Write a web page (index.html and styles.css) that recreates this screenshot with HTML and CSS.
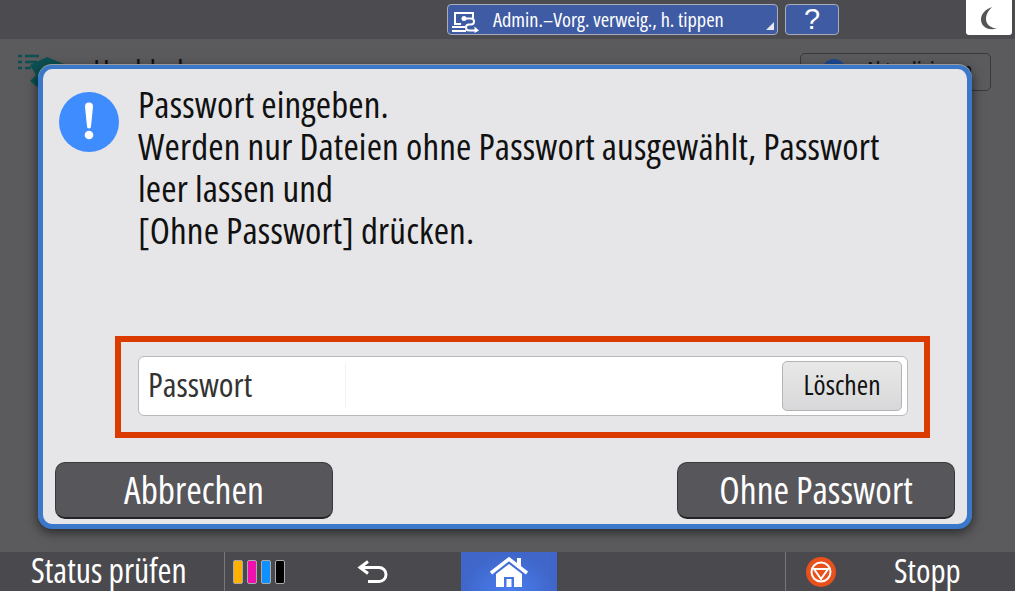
FILE: index.html
```html
<!DOCTYPE html>
<html lang="de">
<head>
  <meta charset="UTF-8">
  <title>Passwort eingeben</title>
  <link rel="stylesheet" href="styles.css">
</head>
<body>
  <div class="topbar">
    <div class="admin-btn">
      <svg class="admin-icon" width="28" height="22" viewBox="0 0 28 22" fill="none" stroke="#fff" stroke-width="2">
        <path d="M21 7V2H3v11h6"/>
        <path d="M0 16h13M0 20h14"/>
        <circle cx="12" cy="7.500" r="2.500" fill="#fff" stroke="none"/>
        <path d="M14 7.500h5a3 3 0 0 1 0 6h-2a3 3 0 0 0 0 6h6"/>
        <path d="M22.500 15.500l4.500 4-4.500 2.500z" fill="#fff" stroke="none"/>
      </svg>
      <span class="narrow admin-label">Admin.–Vorg. verweig., h. tippen</span>
      <span class="corner"></span>
    </div>
    <div class="help-btn">?</div>
    <div class="moon-tile">
      <svg width="16" height="23" viewBox="0 0 16 23"><path d="M11 0C3 3 0 8 0 12.500C0 19 6 24 16 21.500C9 21 5 17 5 12C5 7 8 3 11 0Z" fill="#555"/></svg>
    </div>
  </div>

  <div class="main">
    <div class="behind">
      <svg width="50" height="38" viewBox="0 0 50 38">
        <path d="M0 3h4M7 3h14M0 9h4M7 9h12M0 15h4M7 15h6" stroke="#0c5052" stroke-width="2.500"/>
        <path d="M12 12L29 4l17 7-22 19-5 4-7-6 6-6z" fill="#0c5052"/>
      </svg>
      <span class="narrow behind-title">Hochladen</span>
      <div class="behind-btn">
        <span class="behind-dot"></span>
        <span class="narrow behind-btn-label">Aktualisieren</span>
      </div>
    </div>

    <div class="dialog">
      <div class="message">
        <svg class="info" width="60" height="60" viewBox="0 0 60 60">
          <circle cx="30" cy="30" r="30" fill="#3f8cff"/>
          <path d="M26 14.500a4 4 0 0 1 8 0L32 34.500a2 2 0 0 1-4 0Z" fill="#fff"/>
          <circle cx="30" cy="43" r="4.300" fill="#fff"/>
        </svg>
        <p class="narrow message-text">Passwort eingeben.<br>Werden nur Dateien ohne Passwort ausgewählt, Passwort<br>leer lassen und<br>[Ohne Passwort] drücken.</p>
      </div>

      <div class="highlight">
        <div class="field">
          <span class="narrow field-label">Passwort</span>
          <span class="field-value"></span>
          <div class="narrow clear-btn">Löschen</div>
        </div>
      </div>

      <div class="actions">
        <div class="narrow action-btn">Abbrechen</div>
        <div class="narrow action-btn">Ohne Passwort</div>
      </div>
    </div>
  </div>

  <div class="bottombar">
    <div class="narrow status">Status prüfen</div>
    <div class="inks">
      <span class="ink ink-y"></span>
      <span class="ink ink-m"></span>
      <span class="ink ink-c"></span>
      <span class="ink ink-k"></span>
    </div>
    <div class="back">
      <svg width="32" height="24" viewBox="0 0 32 24" fill="none" stroke="#fff" stroke-width="3">
        <path d="M11 1.500L3 7.500l8 6"/>
        <path d="M3 7.500h19a7 7 0 0 1 0 14H11"/>
      </svg>
    </div>
    <div class="home">
      <svg width="38" height="30" viewBox="0 0 38 30">
        <path d="M1 16L19 2l18 14" fill="none" stroke="#fff" stroke-width="3.500"/>
        <path d="M27 1h4v10h-4z" fill="#fff"/>
        <path fill-rule="evenodd" d="M6 17L19 7l13 10v13H6zM14 20v10h10V20z" fill="#fff"/>
        <path d="M16.500 22h5v8h-5z" fill="#fff"/>
      </svg>
    </div>
    <div class="stop">
      <svg width="30" height="30" viewBox="0 0 30 30" fill="none" stroke="#fff" stroke-width="2">
        <circle cx="15" cy="15" r="15" fill="#e8501c" stroke="none"/>
        <circle cx="15" cy="15" r="9.500"/>
        <path d="M8 12h14l-7 10z"/>
      </svg>
      <span class="narrow stop-label">Stopp</span>
    </div>
  </div>
</body>
</html>
```

FILE: styles.css
```css
html, body {
  margin: 0;
  height: 100%;
}
body {
  width: 1015px;
  height: 591px;
  display: flex;
  flex-direction: column;
  overflow: hidden;
  background: #5b5a5d;
  font-family: "Open Sans", "Noto Sans", sans-serif;
}
.narrow {
  font-family: "Open Sans", "Noto Sans", sans-serif;
  font-stretch: 75%;
  white-space: nowrap;
}

/* top bar */
.topbar {
  height: 39px;
  flex: none;
  display: flex;
  background: #4c4b50;
  padding-left: 447px;
  box-sizing: border-box;
}
.admin-btn, .help-btn {
  height: 31px;
  margin-top: 4px;
  box-sizing: border-box;
  background: #3e5ba3;
  border: 1px solid #a9adb8;
  border-radius: 4px;
  color: #fff;
}
.admin-btn {
  width: 331px;
  display: flex;
  align-items: center;
  padding-left: 4px;
  position: relative;
}
.admin-icon {
  flex: none;
  margin-top: 5px;
}
.admin-label {
  margin: 0 0 2px 13px;
  font-size: 20.400px;
}
.corner {
  position: absolute;
  right: 3px;
  bottom: 4px;
  border-style: solid;
  border-width: 0 0 8px 8px;
  border-color: transparent transparent #e8e8ee transparent;
}
.help-btn {
  width: 54px;
  margin-left: 7px;
  text-align: center;
  font-family: "Liberation Sans", sans-serif;
  font-size: 29px;
  line-height: 28px;
}
.moon-tile {
  width: 46px;
  height: 35px;
  margin-left: 127px;
  background: #fff;
  border-radius: 0 0 3px 3px;
  box-sizing: border-box;
  display: flex;
  align-items: flex-start;
  padding: 7px 0 0 15px;
}

/* page under the dialog */
.main {
  flex: 1;
  position: relative;
}
.behind {
  display: flex;
  align-items: flex-start;
  padding: 14px 24px 0 18px;
}
.behind svg {
  flex: none;
}
.behind-title {
  margin-left: 25px;
  color: #111;
  font-size: 32px;
  line-height: 38px;
}
.behind-btn {
  width: 191px;
  height: 38px;
  margin-left: auto;
  box-sizing: border-box;
  border: 1px solid #38383a;
  border-radius: 5px;
  display: flex;
  align-items: center;
  padding-left: 21px;
}
.behind-dot {
  width: 24px;
  height: 24px;
  margin-bottom: 2px;
  border-radius: 50%;
  background: #1c4a94;
}
.behind-btn-label {
  margin: 0 0 6px 19px;
  color: #111;
  font-size: 24px;
}

/* dialog */
.dialog {
  position: absolute;
  left: 38px;
  top: 26px;
  width: 934px;
  height: 464px;
  box-sizing: border-box;
  background: #e6e6e8;
  border: solid #3b78c9;
  border-width: 4px 5px 5px;
  border-radius: 14px;
  box-shadow: 0 -1px 0 #9a9a9a, 0 3px 12px rgba(0, 0, 0, 0.6);
  padding: 19px 12px 0 12px;
}
.message {
  display: flex;
  align-items: flex-start;
  height: 248px;
}
.info {
  flex: none;
  margin: 4px 0 0 4px;
}
.message-text {
  margin: -5px 0 0 19px;
  color: #111;
  font-size: 37px;
  letter-spacing: 0.15px;
  line-height: 42px;
}
.highlight {
  width: 815px;
  height: 102px;
  margin-left: 60px;
  box-sizing: border-box;
  border: 6px solid #dc3b00;
  padding: 14px 16px 0 17px;
}
.field {
  height: 60px;
  box-sizing: border-box;
  background: #fff;
  border: 1px solid #b9b9bc;
  border-radius: 6px;
  display: flex;
  align-items: center;
  padding: 0 5px 0 9px;
}
.field-label {
  width: 197px;
  flex: none;
  margin-bottom: 4px;
  color: #333;
  font-size: 33.500px;
}
.field-value {
  flex: 1;
  height: 44px;
  border-left: 1px solid #f2f2f2;
}
.clear-btn {
  width: 120px;
  height: 50px;
  flex: none;
  box-sizing: border-box;
  background: linear-gradient(#e8e8e8, #d8d8da);
  border: 1px solid #b4b4b6;
  border-radius: 5px;
  text-align: center;
  color: #111;
  font-size: 27.500px;
  line-height: 45px;
}
.actions {
  display: flex;
  justify-content: space-between;
  margin-top: 24px;
}
.action-btn {
  width: 278px;
  height: 57px;
  box-sizing: border-box;
  background: #57565a;
  border: 1px solid #3a3a3c;
  border-bottom: 2px solid #232325;
  border-radius: 10px;
  text-align: center;
  color: #fff;
  font-size: 37.500px;
  line-height: 54px;
}

/* bottom bar */
.bottombar {
  height: 39px;
  flex: none;
  display: flex;
  align-items: center;
  background: #4a494d;
  color: #fff;
}
.status {
  width: 225px;
  height: 39px;
  flex: none;
  box-sizing: border-box;
  padding-left: 31px;
  border-right: 1px solid #77767a;
  font-size: 33.700px;
  line-height: 37px;
}
.inks {
  display: flex;
  flex: none;
  gap: 4px;
  margin-left: 8px;
}
.ink {
  width: 10px;
  height: 24px;
  box-sizing: border-box;
  border: 1px solid #aaa;
  border-radius: 2px;
}
.ink-y { background: #ffb000; }
.ink-m { background: #f010b0; }
.ink-c { background: #1090ff; }
.ink-k { background: #000; }
.back {
  width: 32px;
  height: 24px;
  flex: none;
  margin-left: 72px;
}
.home {
  width: 96px;
  height: 39px;
  flex: none;
  margin-left: 72px;
  box-sizing: border-box;
  background: radial-gradient(ellipse at 50% 100%, #4a7df0, #3f66c8 70%);
  display: flex;
  align-items: flex-end;
  justify-content: center;
  padding-bottom: 4px;
}
.stop {
  height: 39px;
  flex: 1;
  margin-left: 228px;
  box-sizing: border-box;
  border-left: 1px solid #77767a;
  display: flex;
  align-items: center;
  padding-left: 20px;
}
.stop svg {
  flex: none;
}
.stop-label {
  margin: 0 0 3px 58px;
  font-size: 33px;
}
```
